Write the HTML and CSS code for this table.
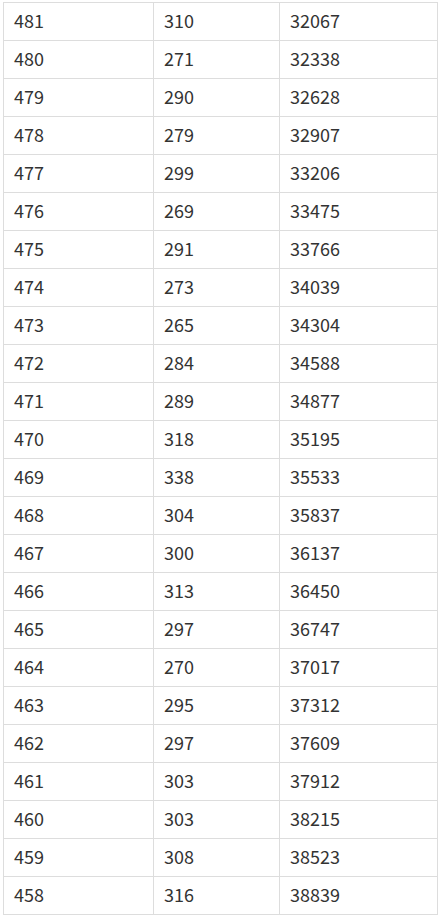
FILE: index.html
```html
<!DOCTYPE html>
<html>
<head>
<meta charset="utf-8">
<link rel="stylesheet" href="styles.css">
</head>
<body>
<table class="score-table">
<colgroup><col class="c1"><col class="c2"><col class="c3"></colgroup>
<tbody>
<tr><td>481</td><td>310</td><td>32067</td></tr>
<tr><td>480</td><td>271</td><td>32338</td></tr>
<tr><td>479</td><td>290</td><td>32628</td></tr>
<tr><td>478</td><td>279</td><td>32907</td></tr>
<tr><td>477</td><td>299</td><td>33206</td></tr>
<tr><td>476</td><td>269</td><td>33475</td></tr>
<tr><td>475</td><td>291</td><td>33766</td></tr>
<tr><td>474</td><td>273</td><td>34039</td></tr>
<tr><td>473</td><td>265</td><td>34304</td></tr>
<tr><td>472</td><td>284</td><td>34588</td></tr>
<tr><td>471</td><td>289</td><td>34877</td></tr>
<tr><td>470</td><td>318</td><td>35195</td></tr>
<tr><td>469</td><td>338</td><td>35533</td></tr>
<tr><td>468</td><td>304</td><td>35837</td></tr>
<tr><td>467</td><td>300</td><td>36137</td></tr>
<tr><td>466</td><td>313</td><td>36450</td></tr>
<tr><td>465</td><td>297</td><td>36747</td></tr>
<tr><td>464</td><td>270</td><td>37017</td></tr>
<tr><td>463</td><td>295</td><td>37312</td></tr>
<tr><td>462</td><td>297</td><td>37609</td></tr>
<tr><td>461</td><td>303</td><td>37912</td></tr>
<tr><td>460</td><td>303</td><td>38215</td></tr>
<tr><td>459</td><td>308</td><td>38523</td></tr>
<tr><td>458</td><td>316</td><td>38839</td></tr>
</tbody>
</table>
</body>
</html>
```
FILE: styles.css
```css
html, body {
  margin: 0;
  padding: 0;
  background: #fff;
  overflow: hidden;
}
body {
  padding: 2px 0 0 3px;
  font-family: "Noto Sans CJK SC", "Noto Sans", sans-serif;
  color: #333;
}
.score-table {
  border-collapse: collapse;
  table-layout: fixed;
  width: 434px;
}
.c1 { width: 150px; }
.c2 { width: 126px; }
.c3 { width: 158px; }
.score-table td {
  border: 1px solid #ddd;
  padding: 0 0 2px 10px;
  font-size: 18px;
  line-height: 35px;
  vertical-align: middle;
}
```
